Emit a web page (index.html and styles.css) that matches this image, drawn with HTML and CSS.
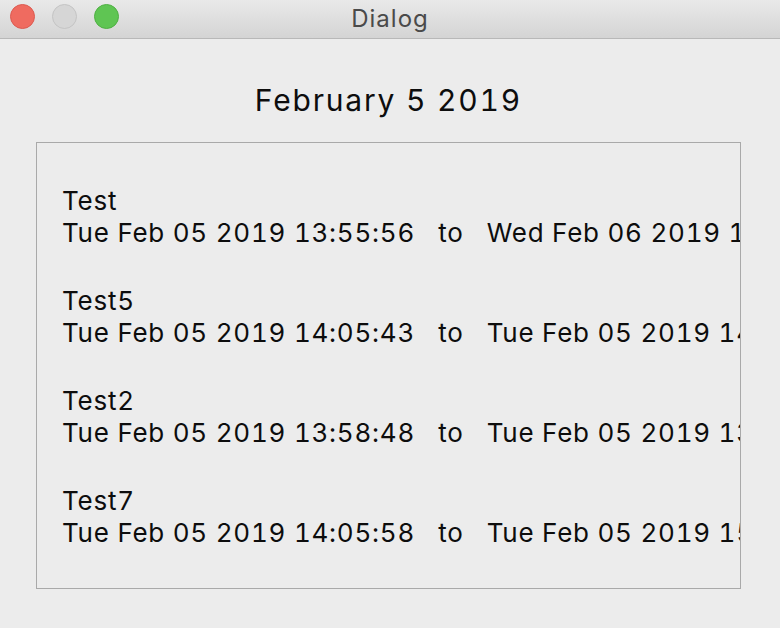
FILE: index.html
```html
<!DOCTYPE html>
<html>
<head>
<meta charset="utf-8">
<link rel="stylesheet" href="styles.css">
</head>
<body>
<div class="window">
  <div class="titlebar">
    <div class="lights">
      <span class="light red"></span>
      <span class="light gray"></span>
      <span class="light green"></span>
    </div>
    <div class="title">Dialog</div>
  </div>
  <div class="content">
    <h1 class="heading">February 5 2019</h1>
    <div class="box">
      <div class="entry">
        <div class="line">Test</div>
        <div class="line">Tue Feb 05 2019 13:55:56   to   Wed Feb 06 2019 13:55:56</div>
      </div>
      <div class="entry">
        <div class="line">Test5</div>
        <div class="line">Tue Feb 05 2019 14:05:43   to   Tue Feb 05 2019 14:05:43</div>
      </div>
      <div class="entry">
        <div class="line">Test2</div>
        <div class="line">Tue Feb 05 2019 13:58:48   to   Tue Feb 05 2019 13:58:48</div>
      </div>
      <div class="entry">
        <div class="line">Test7</div>
        <div class="line">Tue Feb 05 2019 14:05:58   to   Tue Feb 05 2019 15:05:58</div>
      </div>
    </div>
  </div>
</div>
</body>
</html>
```
FILE: styles.css
```css
html, body {
  margin: 0;
  padding: 0;
  background: #ececec;
}
.window {
  width: 780px;
  height: 628px;
  overflow: hidden;
  font-family: "Inter", "Liberation Sans", sans-serif;
  font-variant-numeric: tabular-nums;
  color: #0d0d0d;
}
.titlebar {
  position: relative;
  height: 38px;
  background: linear-gradient(#e9e9e9, #d4d4d4);
  border-bottom: 1px solid #b8b8b8;
  display: flex;
  align-items: center;
  justify-content: center;
}
.lights {
  position: absolute;
  left: 10px;
  top: 4px;
  display: flex;
  gap: 17px;
}
.light {
  width: 25px;
  height: 25px;
  border-radius: 50%;
  box-sizing: border-box;
}
.red { background: #ef6b60; border: 1px solid #dc5a50; }
.gray { background: #d6d6d6; border: 1px solid #c4c4c4; }
.green { background: #5fc553; border: 1px solid #4fb043; }
.title {
  font-size: 24px;
  letter-spacing: 1px;
  color: #4a4a4a;
  margin-top: -2px;
}
.content {
  padding: 0 39px 0 36px;
}
.heading {
  margin: 0 0 24px;
  padding-top: 43px;
  font-weight: normal;
  font-size: 30px;
  line-height: 36px;
  letter-spacing: 1.8px;
  text-align: center;
}
.box {
  height: 403px;
  border: 1px solid #a9a9a9;
  overflow: hidden;
  padding: 42px 0 0 25px;
  display: flex;
  flex-direction: column;
  gap: 36px;
}
.entry {
  font-size: 26px;
  line-height: 32px;
  letter-spacing: 0.75px;
}
.line {
  white-space: pre;
}
```
